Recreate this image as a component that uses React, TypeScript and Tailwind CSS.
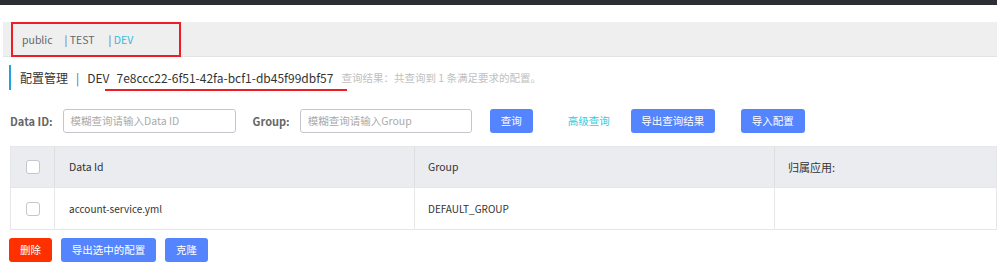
import React from "react";

const Btn = ({ children, className = "" }: { children: React.ReactNode; className?: string }) => (
  <div className={`h-[24px] rounded-[3px] flex items-center justify-center text-white text-[10.5px] ${className}`}>{children}</div>
);

const Checkbox = () => (
  <div className="w-[14px] h-[14px] rounded-[3px] border border-[#c4c6cf] bg-white" />
);

export default function App() {
  return (
    <div
      className="w-[1000px] h-[279px] bg-white overflow-hidden relative"
      style={{ fontFamily: '"Noto Sans CJK SC", sans-serif' }}
    >
      <div className="h-[5px] bg-[#2b2f33] w-[997px]" />
      <div className="flex">
        <div className="w-[997px] pl-[3px]">
          <div className="mt-[17px] h-[35px] bg-[#efefef] border-b border-[#e3e3e3] flex items-center relative">
            <div className="absolute left-[8px] top-0 w-[170px] h-[35px] border-2 border-[#ee1c24]" />
            <div className="flex items-center text-[10.5px] text-[#666] pl-[19px] pt-[2px] whitespace-pre">
              <span>public</span>
              <span className="ml-[12px]">| TEST</span>
              <span className="ml-[14px] text-[#33bbdd]"><span className="text-[#666]">| </span>DEV</span>
            </div>
          </div>

          <div className="mt-[8px] flex items-center h-[25px] relative">
            <div className="ml-[6px] w-[2px] h-[25px] bg-[#1fa2e0]" />
            <div className="ml-[9px] text-[12px] text-[#333] flex items-center whitespace-nowrap">
              <span>配置管理</span>
              <span className="ml-[8px] mr-[8px] text-[#666]">|</span>
              <span>DEV</span>
              <span className="ml-[7px] text-[#333]">7e8ccc22-6f51-42fa-bcf1-db45f99dbf57</span>
              <span className="ml-[8px] text-[10.5px] text-[#c0c0c0]">
                查询结果：共查询到 1 条满足要求的配置。
              </span>
            </div>
            <div className="absolute left-[102px] top-[24px] w-[242px] h-[2px] bg-[#ee1c24]" />
          </div>

          <div className="mt-[19px] flex items-center h-[24px]">
            <span className="ml-[7px] font-bold text-[#666] text-[11px]">Data ID:</span>
            <div className="ml-[10px] w-[173px] h-[24px] border border-[#c4c6cf] rounded-[3px] flex items-center pl-[7px] text-[#aaa] text-[10.5px]">
              模糊查询请输入Data ID
            </div>
            <span className="ml-[17px] font-bold text-[#666] text-[11px]">Group:</span>
            <div className="ml-[10px] w-[172px] h-[24px] border border-[#c4c6cf] rounded-[3px] flex items-center pl-[7px] text-[#aaa] text-[10.5px]">
              模糊查询请输入Group
            </div>
            <Btn className="ml-[18px] w-[43px] bg-[#5584ff]">查询</Btn>
            <span className="ml-[35px] text-[#33ccdd] text-[10.5px]">高级查询</span>
            <Btn className="ml-[21px] w-[84px] bg-[#5584ff]">导出查询结果</Btn>
            <Btn className="ml-[26px] w-[64px] bg-[#5584ff]">导入配置</Btn>
          </div>

          <div className="mt-[13px] ml-[7px] border border-[#e6e7eb] text-[10.5px] text-[#333]">
            <div className="flex h-[41px] bg-[#ebecf0] border-b border-[#e6e7eb]">
              <div className="w-[44px] border-r border-[#dcdee3] flex items-center justify-center"><Checkbox /></div>
              <div className="w-[360px] border-r border-[#dcdee3] flex items-center pl-[14px]">Data Id</div>
              <div className="w-[360px] border-r border-[#dcdee3] flex items-center pl-[13px]">Group</div>
              <div className="flex-1 flex items-center pl-[13px] text-[11px]">归属应用:</div>
            </div>
            <div className="flex h-[41px] bg-white text-[10px]">
              <div className="w-[44px] border-r border-[#e6e7eb] flex items-center justify-center"><Checkbox /></div>
              <div className="w-[360px] border-r border-[#e6e7eb] flex items-center pl-[14px]">account-service.yml</div>
              <div className="w-[360px] border-r border-[#e6e7eb] flex items-center pl-[13px]">DEFAULT_GROUP</div>
              <div className="flex-1" />
            </div>
          </div>

          <div className="mt-[8px] ml-[6px] flex items-center gap-[9px]">
            <Btn className="w-[43px] bg-[#ff3000]">删除</Btn>
            <Btn className="w-[95px] bg-[#5584ff]">导出选中的配置</Btn>
            <Btn className="w-[43px] bg-[#5584ff]">克隆</Btn>
          </div>
        </div>
      </div>
    </div>
  );
}
